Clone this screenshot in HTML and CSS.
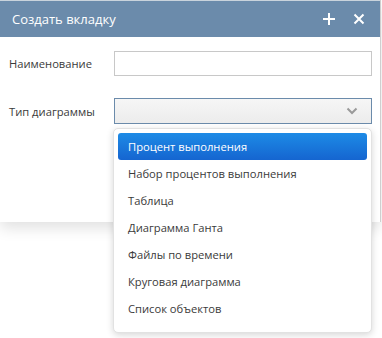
FILE: index.html
```html
<!DOCTYPE html>
<html lang="ru">
<head>
    <meta charset="UTF-8">
    <meta name="viewport" content="width=device-width, initial-scale=1.0">
    <title>Создать вкладку</title>
    <link rel="stylesheet" href="styles.css">
</head>
<body>
    <div class="dialog">
        <div class="dialog-header">
            <span class="dialog-title">Создать вкладку</span>
            <div class="header-tools">
                <svg class="tool" width="14" height="14" viewBox="0 0 14 14">
                    <path d="M7 1V13M1 7H13" stroke="#fff" stroke-width="2" fill="none"/>
                </svg>
                <svg class="tool" width="14" height="14" viewBox="0 0 14 14">
                    <path d="M2.5 2.5L11.5 11.5M11.5 2.5L2.5 11.5" stroke="#fff" stroke-width="2" fill="none"/>
                </svg>
            </div>
        </div>
        <div class="dialog-body">
            <div class="form-row">
                <label class="form-label">Наименование</label>
                <input class="form-input" type="text">
            </div>
            <div class="form-row">
                <label class="form-label">Тип диаграммы</label>
                <div class="form-select">
                    <svg width="12" height="8" viewBox="0 0 12 8">
                        <path d="M1.5 1.5L6 6L10.5 1.5" stroke="#9a9a9a" stroke-width="2" fill="none"/>
                    </svg>
                </div>
            </div>
        </div>

        <!-- выпадающий список -->
        <ul class="dropdown">
            <li class="active">Процент выполнения</li>
            <li>Набор процентов выполнения</li>
            <li>Таблица</li>
            <li>Диаграмма Ганта</li>
            <li>Файлы по времени</li>
            <li>Круговая диаграмма</li>
            <li>Список объектов</li>
        </ul>
    </div>
</body>
</html>
```

FILE: styles.css
```css
html, body {
    height: 100%;
}
body {
    margin: 0;
    font-family: "Open Sans", "Noto Sans", sans-serif;
    font-size: 11.2px;
    color: #3a3a3a;
    background-color: #fff;
}
.dialog {
    position: relative;
    width: 380px;
    height: 222px;
    background-color: #fff;
    border-right: 1px solid #cfcfcf;
    box-shadow: 0 6px 14px rgba(0, 0, 0, 0.12);
}
.dialog-header {
    height: 37px;
    background-color: #6b8bab;
    border-top: 1px solid #c9d3dc;
    box-sizing: border-box;
    display: flex;
    align-items: center;
    justify-content: space-between;
    padding: 0 14px 0 12px;
}
.dialog-title {
    color: #fff;
    font-size: 13px;
}
.header-tools {
    display: flex;
    gap: 16px;
}
.dialog-body {
    padding: 14px 8px 0 9px;
}
.form-row {
    display: flex;
    align-items: center;
    margin-bottom: 22px;
}
.form-label {
    width: 105px;
}
.form-input {
    width: 258px;
    height: 25px;
    box-sizing: border-box;
    border: 1px solid #c8c8c8;
    margin: 0;
    padding: 0 6px;
}
.form-select {
    width: 258px;
    height: 26px;
    box-sizing: border-box;
    border: 1px solid #6b8bab;
    background: linear-gradient(#f6f6f6, #ececec);
    display: flex;
    align-items: center;
    justify-content: flex-end;
    padding-right: 13px;
}

/* Список */
.dropdown {
    position: absolute;
    z-index: 10;
    left: 113px;
    top: 128px;
    width: 259px;
    height: 205px;
    box-sizing: border-box;
    margin: 0;
    padding: 4px 4px;
    list-style: none;
    background-color: #fff;
    border: 1px solid #e2e2e2;
    border-radius: 5px;
    box-shadow: 0 2px 7px rgba(0, 0, 0, 0.16);
}
.dropdown li {
    height: 27px;
    line-height: 27px;
    padding-left: 10px;
    border-radius: 3px;
}
.dropdown li.active {
    color: #fff;
    background: linear-gradient(#1d8be6, #1565d0);
}
```
